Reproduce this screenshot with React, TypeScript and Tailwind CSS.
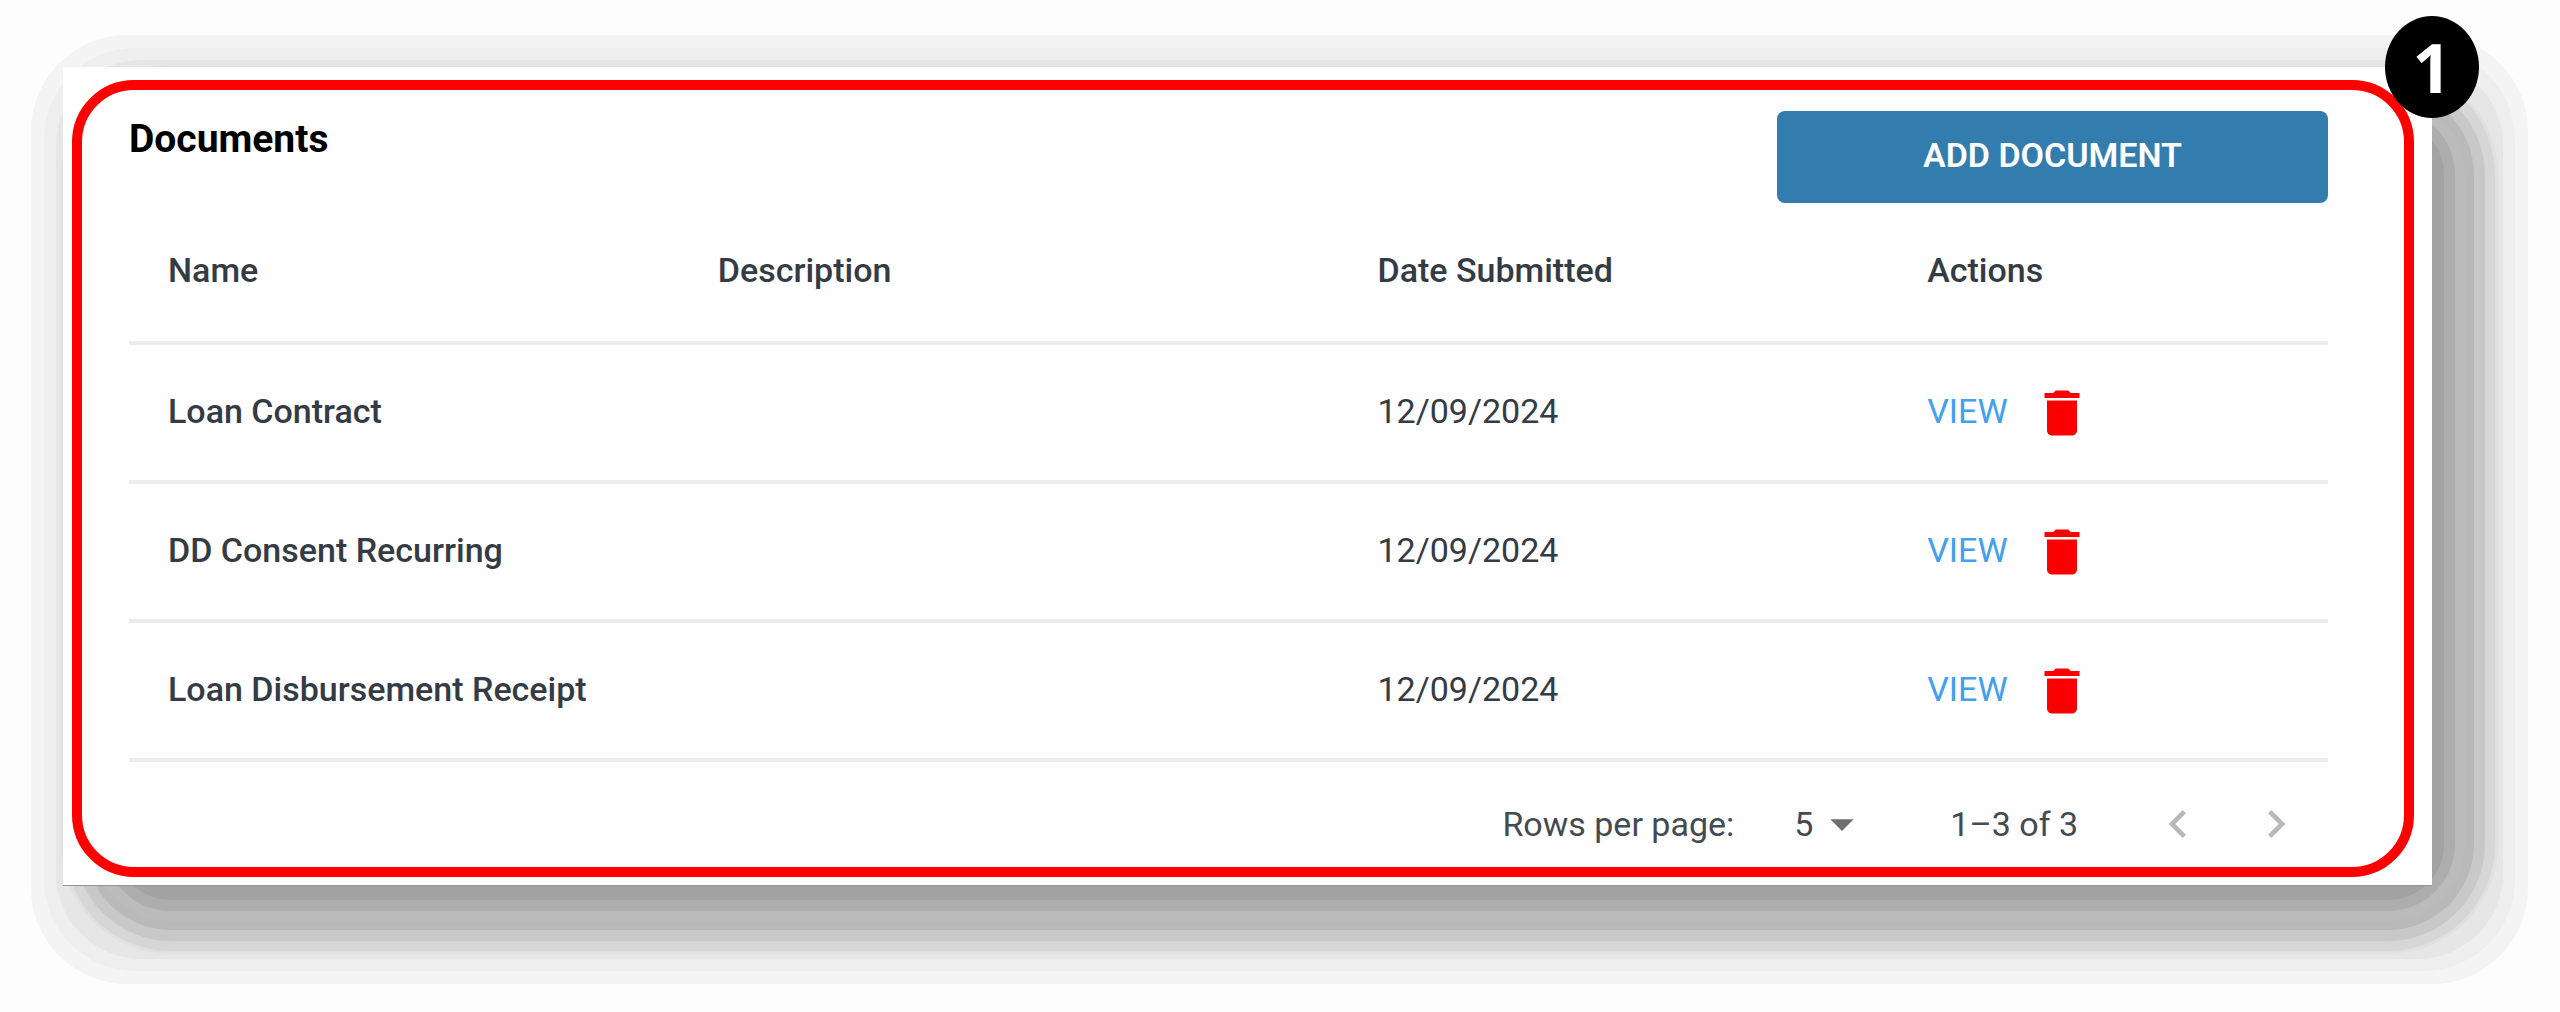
import { useState } from "react";
import { MdArrowDropDown, MdChevronLeft, MdChevronRight, MdDelete } from "react-icons/md";

type LoanDocument = {
  name: string;
  description: string;
  submitted: string;
};

const documents: LoanDocument[] = [
  { name: "Loan Contract", description: "", submitted: "12/09/2024" },
  { name: "DD Consent Recurring", description: "", submitted: "12/09/2024" },
  { name: "Loan Disbursement Receipt", description: "", submitted: "12/09/2024" },
];

// Stepped drop shadow: wide light bands first, tighter dark bands on top
function CardShadow() {
  return (
    <>
      <div className="absolute top-13 left-13 -right-3 -bottom-3.5 rounded-[32px] shadow-[0_0_0_59px_#e6e6e6,0_0_0_71px_#eeeeee,0_0_0_84px_#f4f4f4]" />
      <div className="absolute top-13 left-13 -right-3 -bottom-3.5 rounded-[56px] bg-[#a2a2a2] shadow-[0_0_0_11px_#adadad,0_0_0_21px_#bbbbbb,0_0_0_30px_#b9b9b9,0_0_0_41px_#c8c8c8,0_0_0_51px_#d6d6d6,0_0_0_54px_#e0e0e0]" />
    </>
  );
}

function DocumentsTable() {
  return (
    <table className="w-full table-fixed border-collapse text-left text-[34px] leading-10 text-[#343b45]">
      <thead>
        <tr className="h-[140px] border-b-4 border-[#ececec]">
          <th scope="col" className="w-[25%] px-[39px] pb-1 font-medium">Name</th>
          <th scope="col" className="w-[30%] px-[39px] pb-1 font-medium">Description</th>
          <th scope="col" className="w-[25%] px-[39px] pb-1 font-medium">Date Submitted</th>
          <th scope="col" className="w-[20%] px-[39px] pb-1 font-medium">Actions</th>
        </tr>
      </thead>
      <tbody>
        {documents.map((doc) => (
          <tr key={doc.name} className="h-[139px] border-b-4 border-[#ececec]">
            <td className="px-[39px] pb-1 font-medium whitespace-nowrap">{doc.name}</td>
            <td className="px-[39px] pb-1">{doc.description}</td>
            <td className="px-[39px] pb-1">{doc.submitted}</td>
            <td className="px-[39px]">
              <div className="flex items-center gap-6">
                <a href="#view" className="pb-1 text-[#42a0ee]">VIEW</a>
                <button type="button" aria-label={`Delete ${doc.name}`} className="text-[#fb0000]">
                  <MdDelete className="size-15" />
                </button>
              </div>
            </td>
          </tr>
        ))}
      </tbody>
    </table>
  );
}

function Pagination() {
  const [rowsPerPage, setRowsPerPage] = useState("5");

  return (
    <div className="flex items-center justify-end pt-[34px] pr-6 text-[34px] leading-10 text-[#444a52]">
      <label htmlFor="rows-per-page">Rows per page:</label>
      <div className="relative ml-15 flex items-center">
        <select
          id="rows-per-page"
          value={rowsPerPage}
          onChange={(e) => setRowsPerPage(e.target.value)}
          className="w-19 appearance-none bg-transparent"
        >
          <option value="5">5</option>
          <option value="10">10</option>
          <option value="25">25</option>
        </select>
        <MdArrowDropDown className="pointer-events-none absolute right-0 size-14 text-[#6f6f6f]" />
      </div>
      <span className="ml-20">1–3 of 3</span>
      <div className="ml-18 flex gap-[42px] text-[#b8b8b8]">
        <button type="button" disabled aria-label="Previous page">
          <MdChevronLeft className="size-14" />
        </button>
        <button type="button" disabled aria-label="Next page">
          <MdChevronRight className="size-14" />
        </button>
      </div>
    </div>
  );
}

export default function App() {
  return (
    <main className="min-h-screen bg-[#fdfdfd] pt-[67px] pr-32 pl-[63px] font-[Roboto,sans-serif]">
      <div className="relative">
        <CardShadow />
        <section className="relative border-b border-[#969696] bg-[#fefefe] pt-[13px] pr-[18px] pb-2 pl-[9px]">
          <div className="rounded-[62px] border-10 border-[#fe0000] pt-[21px] pr-19 pb-[15px] pl-[47px]">
            <div className="flex items-start justify-between">
              <h2 className="pt-1 text-[39px] leading-12 font-bold text-black">Documents</h2>
              <button
                type="button"
                className="h-23 w-[551px] rounded-lg bg-[#327cae] pb-1 text-[34px] leading-10 font-semibold text-white"
              >
                ADD DOCUMENT
              </button>
            </div>
            <DocumentsTable />
            <Pagination />
          </div>
        </section>
        <div className="absolute -top-[51px] -right-[47px] flex h-[102px] w-[94px] items-center justify-center rounded-[50%] bg-black font-['Open_Sans',sans-serif] text-[68px] leading-none font-bold text-white">
          1
        </div>
      </div>
    </main>
  );
}
